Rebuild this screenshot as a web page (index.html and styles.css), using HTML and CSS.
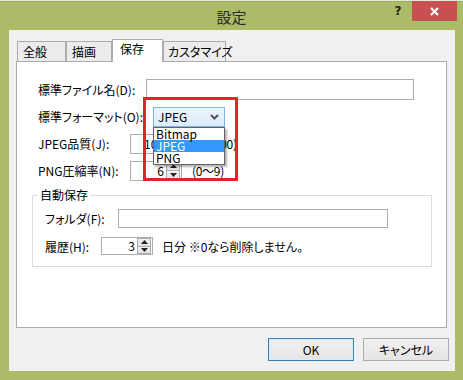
FILE: index.html
```html
<!DOCTYPE html>
<html lang="ja">
<head>
<meta charset="utf-8">
<title>設定</title>
<link rel="stylesheet" href="styles.css">
</head>
<body>
<div class="strip"></div>
<div class="titlebar">
  <div></div>
  <div class="title">設定</div>
  <div class="controls">
    <span class="help">?</span>
    <span class="close"><svg width="9" height="9" viewBox="0 0 9 9"><path d="M1 1L8 8M8 1L1 8" stroke="#fff" stroke-width="2" fill="none"/></svg></span>
  </div>
</div>
<div class="client">
  <div class="tabs">
    <div class="tab t1">全般</div>
    <div class="tab t2">描画</div>
    <div class="tab t3 active">保存</div>
    <div class="tab t4">カスタマイズ</div>
  </div>
  <div class="panel">
    <div class="row">
      <span class="lbl">標準ファイル名(D):</span>
      <div class="input file"></div>
    </div>
    <div class="row">
      <span class="lbl">標準フォーマット(O):</span>
      <div class="combo">
        <span>JPEG</span>
        <svg class="chev" width="9" height="6" viewBox="0 0 9 6"><path d="M1 1L4.5 4.5L8 1" stroke="#555" stroke-width="2" fill="none"/></svg>
        <ul class="droplist">
          <li>Bitmap</li>
          <li class="sel">JPEG</li>
          <li>PNG</li>
        </ul>
      </div>
    </div>
    <div class="row">
      <span class="lbl">JPEG品質(J):</span>
      <div class="num"><span class="val">100</span>
        <div class="spin"><span class="up"><svg width="7" height="4" viewBox="0 0 7 4"><path d="M0 4L3.5 0L7 4Z" fill="#222"/></svg></span><span class="dn"><svg width="7" height="4" viewBox="0 0 7 4"><path d="M0 0L3.5 4L7 0Z" fill="#222"/></svg></span></div>
      </div>
      <span class="range">(0〜100)</span>
    </div>
    <div class="row">
      <span class="lbl">PNG圧縮率(N):</span>
      <div class="num"><span class="val">6</span>
        <div class="spin"><span class="up"><svg width="7" height="4" viewBox="0 0 7 4"><path d="M0 4L3.5 0L7 4Z" fill="#222"/></svg></span><span class="dn"><svg width="7" height="4" viewBox="0 0 7 4"><path d="M0 0L3.5 4L7 0Z" fill="#222"/></svg></span></div>
      </div>
      <span class="range">(0〜9)</span>
    </div>
    <fieldset class="group">
      <legend>自動保存</legend>
      <div class="grow">
        <span class="glbl1">フォルダ(F):</span>
        <div class="input folder"></div>
      </div>
      <div class="grow second">
        <span class="glbl2">履歴(H):</span>
        <div class="num small"><span class="val">3</span>
          <div class="spin"><span class="up"><svg width="7" height="4" viewBox="0 0 7 4"><path d="M0 4L3.5 0L7 4Z" fill="#222"/></svg></span><span class="dn"><svg width="7" height="4" viewBox="0 0 7 4"><path d="M0 0L3.5 4L7 0Z" fill="#222"/></svg></span></div>
        </div>
        <span class="note">日分 ※0なら削除しません。</span>
      </div>
    </fieldset>
    <div class="highlight"></div>
  </div>
  <div class="buttons">
    <button class="btn default">OK</button>
    <button class="btn">キャンセル</button>
  </div>
</div>
</body>
</html>
```
FILE: styles.css
```css
* { box-sizing: border-box; }
html, body {
  margin: 0;
  padding: 0;
}
body {
  width: 463px;
  height: 380px;
  overflow: hidden;
  background: #abbb68;
  font-family: "Noto Sans CJK JP", "Noto Sans", sans-serif;
  font-size: 12px;
  color: #000;
  font-feature-settings: "palt";
}
.strip {
  height: 2px;
  background: #e6e8e0;
  border-bottom: 1px solid #9aab55;
}
.titlebar {
  height: 28px;
  display: grid;
  grid-template-columns: 1fr auto 1fr;
  align-items: start;
}
.title {
  font-size: 15px;
  line-height: 20px;
  padding-top: 5px;
  color: #2a2a2a;
}
.controls {
  justify-self: end;
  display: flex;
  align-items: flex-start;
  margin-top: -1px;
  margin-right: 6px;
}
.help {
  width: 20px;
  margin-right: 4px;
  text-align: center;
  font-family: "DejaVu Sans", sans-serif;
  font-weight: bold;
  font-size: 12px;
  line-height: 20px;
  color: #222;
}
.close {
  width: 45px;
  height: 20px;
  background: #c75050;
  display: flex;
  align-items: center;
  justify-content: center;
}
.client {
  margin-left: 9px;
  width: 446px;
  height: 341px;
  background: #f0f0f0;
  padding: 9px 6px 0 7px;
}
.tabs {
  display: flex;
  align-items: flex-end;
  height: 22px;
  margin-left: 1px;
  position: relative;
  z-index: 2;
}
.tab {
  height: 20px;
  border: 1px solid #acacac;
  border-bottom: none;
  background: #ececec;
  line-height: 20px;
  white-space: nowrap;
}
.t1 { width: 49px; padding-left: 5px; }
.t2 { width: 46px; padding-left: 5px; }
.t3 { width: 51px; padding-left: 7px; }
.t4 { width: 63px; padding-left: 4px; }
.tab.active {
  height: 23px;
  margin-bottom: -1px;
  background: #fff;
  line-height: 18px;
}
.panel {
  position: relative;
  width: 431px;
  height: 267px;
  border: 1px solid #acacac;
  background: #fff;
  padding: 17px 14px 0 21px;
}
.row {
  display: flex;
  align-items: center;
  height: 21px;
  margin-bottom: 6px;
  position: relative;
}
.lbl {
  width: 92px;
  flex: none;
  white-space: nowrap;
}
.input {
  height: 21px;
  border: 1px solid #abadb3;
  background: #fff;
}
.input.file {
  margin-left: 16px;
  width: 268px;
}
.combo {
  position: relative;
  z-index: 3;
  margin-left: 23px;
  width: 72px;
  height: 20px;
  border: 1px solid #7eb4ea;
  background: linear-gradient(#ecf4fc, #dcecfc);
  display: flex;
  align-items: center;
  padding-left: 4px;
  line-height: 18px;
}
.chev {
  margin-left: auto;
  margin-right: 5px;
}
.droplist {
  position: absolute;
  top: 19px;
  left: -1px;
  width: 72px;
  margin: 0;
  padding: 0;
  list-style: none;
  border: 1px solid #646464;
  background: #fff;
  box-shadow: 2px 2px 2px rgba(0, 0, 0, 0.3);
}
.droplist li {
  height: 12px;
  line-height: 12px;
  padding-left: 2px;
}
.droplist li.sel {
  background: #3399ff;
  color: #fff;
}
.num {
  width: 52px;
  height: 20px;
  border: 1px solid #abadb3;
  background: #fff;
  display: flex;
  align-items: stretch;
}
.num .val {
  flex: 1;
  text-align: right;
  padding-right: 2px;
  line-height: 18px;
}
.spin {
  width: 14px;
  display: flex;
  flex-direction: column;
  margin: 0 1px 0 0;
}
.spin span {
  flex: 1;
  display: flex;
  align-items: center;
  justify-content: center;
  background: linear-gradient(#f2f2f2, #e2e2e2);
  border: 1px solid #acacac;
}
.spin .dn { border-top: none; }
.range {
  margin-left: 10px;
  letter-spacing: -0.3px;
}
.group {
  margin: 0 0 0 -6px;
  width: 400px;
  border: 1px solid #dcdcdc;
  padding: 6px 12px 11px 12px;
  min-width: 0;
}
.group legend {
  padding: 0 2px;
  margin-left: -7px;
  line-height: 16px;
}
.grow {
  display: flex;
  align-items: center;
  height: 19px;
}
.grow.second {
  margin-top: 9px;
  height: 18px;
}
.glbl1 { width: 73px; flex: none; }
.glbl2 { width: 56px; flex: none; }
.input.folder {
  width: 270px;
  height: 19px;
}
.num.small { height: 18px; }
.num.small .val { line-height: 16px; }
.note { margin-left: 9px; }
.highlight {
  position: absolute;
  left: 126px;
  top: 35px;
  width: 95px;
  height: 84px;
  border: 3px solid #e0242c;
  z-index: 5;
  pointer-events: none;
}
.buttons {
  display: flex;
  justify-content: flex-end;
  margin-top: 10px;
}
.btn {
  width: 86px;
  height: 23px;
  margin-left: 9px;
  border: 1px solid #acacac;
  background: linear-gradient(#f0f0f0, #e5e5e5);
  font-family: inherit;
  font-size: 12px;
  font-feature-settings: "palt";
  color: #000;
  padding: 0;
}
.btn.default {
  border-color: #3c7fb1;
  box-shadow: inset 0 0 0 1px #dbeaf7;
}
```
